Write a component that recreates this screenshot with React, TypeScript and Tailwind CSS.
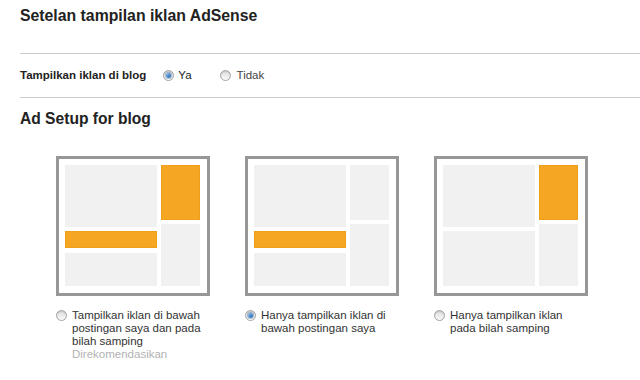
import React, { FC } from "react";

type RadioProps = {
  checked?: boolean;
};

const Radio: FC<RadioProps> = ({ checked }) => {
  return (
    <span className="flex h-[11px] w-[11px] shrink-0 items-center justify-center rounded-full border border-[#a3a3a3] bg-gradient-to-b from-[#dcdcdc] to-[#fbfbfb] shadow-[inset_0_1px_1px_rgba(0,0,0,0.12)]">
      {checked && (
        <span className="block h-[5px] w-[5px] rounded-full bg-gradient-to-br from-[#8fc0ee] to-[#1f5fa8] shadow-[0_0_0_1px_rgba(31,95,168,0.35)]" />
      )}
    </span>
  );
};

type Layout = {
  sideAd: boolean;
  postAd: boolean;
};

const Preview: FC<Layout> = ({ sideAd, postAd }) => {
  const grey = "bg-[#f1f1f1]";
  const orange = "bg-[#f5a623] border border-[#eea01c]";
  return (
    <div className="h-[140px] w-[154px] border-[3px] border-[#979797] bg-white pl-[6px] pr-[7px] pt-[6px] pb-[7px]">
      <div className="flex h-full gap-[4px]">
        <div className="flex w-[92px] flex-col">
          <div className={`h-[62px] ${grey}`} />
          {postAd ? (
            <>
              <div className={`mt-[4px] h-[17px] ${orange}`} />
              <div className={`mt-[5px] flex-1 ${grey}`} />
            </>
          ) : (
            <div className={`mt-[4px] flex-1 ${grey}`} />
          )}
        </div>
        <div className="flex flex-1 flex-col">
          <div className={`h-[55px] ${sideAd ? orange : grey}`} />
          <div className={`mt-[4px] flex-1 ${grey}`} />
        </div>
      </div>
    </div>
  );
};

const options = [
  {
    sideAd: true,
    postAd: true,
    label: "Tampilkan iklan di bawah postingan saya dan pada bilah samping",
    note: "Direkomendasikan",
    checked: false,
  },
  {
    sideAd: false,
    postAd: true,
    label: "Hanya tampilkan iklan di bawah postingan saya",
    checked: true,
  },
  {
    sideAd: true,
    postAd: false,
    label: "Hanya tampilkan iklan pada bilah samping",
    checked: false,
  },
];

const App: FC = () => {
  return (
    <div className="h-[380px] w-[640px] overflow-hidden bg-white font-['Liberation_Sans',Arial,sans-serif] text-[#222]">
      <h1 className="pl-[20px] pt-[7px] text-[15.8px] font-bold leading-[18px]">
        Setelan tampilan iklan AdSense
      </h1>
      <div className="ml-[20px] mt-[28px] h-px bg-[#cdcdcd]" />

      <div className="flex h-[43px] items-center pl-[20px] text-[11.5px] leading-[13px]">
        <span className="font-bold">Tampilkan iklan di blog</span>
        <span className="ml-[17px] flex items-center gap-[4px]">
          <Radio checked />
          <span>Ya</span>
        </span>
        <span className="ml-[28px] flex items-center gap-[6px] text-[#444]">
          <Radio />
          <span>Tidak</span>
        </span>
      </div>
      <div className="ml-[20px] h-px bg-[#cdcdcd]" />

      <h2 className="mt-[12px] pl-[20px] text-[15.6px] font-bold leading-[18px]">
        Ad Setup for blog
      </h2>

      <div className="ml-[56px] mt-[28px] grid grid-cols-[189px_189px_189px]">
        {options.map((opt, index) => (
          <div key={index} className="flex flex-col">
            <Preview sideAd={opt.sideAd} postAd={opt.postAd} />
            <div className="mt-[13px] flex items-start gap-[5px] text-[11.5px] leading-[13px] text-[#333]">
              <span className="mt-[1px]">
                <Radio checked={opt.checked} />
              </span>
              <div className="w-[136px]">
                <p>{opt.label}</p>
                {opt.note && <p className="text-[#b3b3b3]">{opt.note}</p>}
              </div>
            </div>
          </div>
        ))}
      </div>
    </div>
  );
};

export default App;
